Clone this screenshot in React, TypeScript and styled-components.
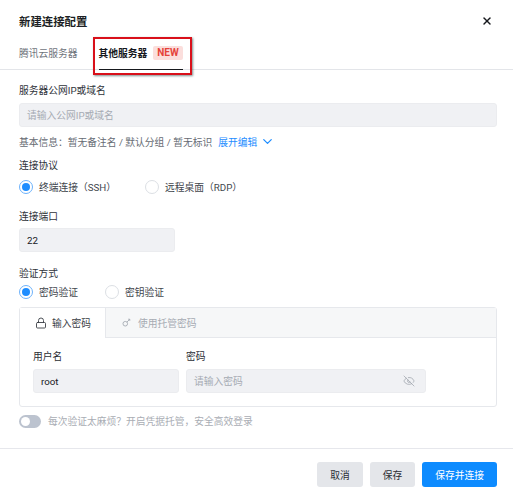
import React from 'react'
import styled, { createGlobalStyle } from 'styled-components'
import { X, ChevronDown, Lock, EyeOff } from 'lucide-react'

const GlobalStyle = createGlobalStyle`
  html, body {
    margin: 0;
    padding: 0;
    background: #fff;
  }
  * {
    box-sizing: border-box;
  }
`

const Dialog = styled.div`
  width: 513px;
  height: 500px;
  display: flex;
  flex-direction: column;
  background: #fff;
  color: #16181d;
  font-family: Roboto, "Noto Sans CJK SC", sans-serif;
  font-size: 9.75px;
  overflow: hidden;
`

const Header = styled.div`
  height: 37px;
  padding: 4px 20px 0 19px;
  display: flex;
  justify-content: space-between;
  align-items: center;
`

const Title = styled.div`
  font-size: 11.4px;
  font-weight: 700;
  color: #1c1f24;
`

const CloseIcon = styled(X)`
  color: #16181d;
`

const TabBar = styled.div`
  height: 33px;
  padding: 0 19px;
  display: flex;
  gap: 21px;
  border-bottom: 1px solid #e3e5e9;
`

const Tab = styled.div<{ $active?: boolean }>`
  position: relative;
  height: 33px;
  padding-top: 9px;
  display: flex;
  gap: 6px;
  align-items: flex-start;
  font-weight: ${(p) => (p.$active ? 700 : 400)};
  color: ${(p) => (p.$active ? '#16181d' : '#6f747c')};
  border-bottom: ${(p) => (p.$active ? '1px solid #16181d' : 'none')};
`

const Highlight = styled.div`
  position: absolute;
  left: -6px;
  right: -9px;
  top: 0;
  bottom: -6px;
  border: 2px solid #d9101a;
  box-shadow: 1px 1px 2px rgba(60, 80, 80, 0.65);
  pointer-events: none;
`

const NewBadge = styled.span`
  height: 14px;
  padding: 0 4px;
  background: #fbdedc;
  border-radius: 2px;
  color: #e5433a;
  font-size: 10px;
  font-weight: 700;
  line-height: 14px;
`

const Body = styled.div`
  flex: 1;
  padding: 12px 16px 0 19px;
  display: flex;
  flex-direction: column;
`

const Label = styled.div<{ $top?: number }>`
  height: 17px;
  line-height: 17px;
  margin-top: ${(p) => p.$top || 0}px;
  color: #2f333a;
`

const Input = styled.div<{ $width?: number; $muted?: boolean; $top?: number }>`
  width: ${(p) => (p.$width ? `${p.$width}px` : '100%')};
  height: 24px;
  margin-top: ${(p) => p.$top || 0}px;
  padding: 0 10px 0 7px;
  display: flex;
  align-items: center;
  justify-content: space-between;
  background: #f0f1f4;
  border: 1px solid #ebecef;
  border-radius: 3px;
  color: ${(p) => (p.$muted ? '#a6abb3' : '#16181d')};
`

const InfoRow = styled.div`
  height: 17px;
  margin-top: 6px;
  display: flex;
  align-items: center;
  color: #666b73;
`

const ExpandLink = styled.span`
  margin-left: 6px;
  display: flex;
  align-items: center;
  gap: 3px;
  color: #1e8dff;
`

const RadioRow = styled.div<{ $gap: number; $top: number }>`
  height: 16px;
  margin-top: ${(p) => p.$top}px;
  display: flex;
  gap: ${(p) => p.$gap}px;
`

const RadioItem = styled.div`
  display: flex;
  align-items: center;
  gap: 6px;
  color: #42464d;
`

const RadioDot = styled.span<{ $on?: boolean }>`
  position: relative;
  width: 14px;
  height: 14px;
  border-radius: 50%;
  background: #fff;
  border: 1px solid ${(p) => (p.$on ? '#6db2fb' : '#dcdfe4')};

  &::after {
    content: '';
    display: ${(p) => (p.$on ? 'block' : 'none')};
    position: absolute;
    inset: 2px;
    border-radius: 50%;
    background: #1e8dff;
  }
`

const Panel = styled.div`
  margin-top: 7px;
  width: 478px;
  height: 100px;
  border: 1px solid #e6e8ec;
  border-radius: 3px;
  display: flex;
  flex-direction: column;
`

const PanelTabs = styled.div`
  height: 30px;
  display: flex;
  background: #f6f7f8;
  border-bottom: 1px solid #e6e8ec;
`

const PanelTab = styled.div<{ $active?: boolean }>`
  width: ${(p) => (p.$active ? '86px' : 'auto')};
  margin-bottom: ${(p) => (p.$active ? '-1px' : '0')};
  padding-left: ${(p) => (p.$active ? '15px' : '16px')};
  display: flex;
  align-items: center;
  gap: ${(p) => (p.$active ? '5px' : '7px')};
  background: ${(p) => (p.$active ? '#fff' : 'transparent')};
  border-right: ${(p) => (p.$active ? '1px solid #e6e8ec' : 'none')};
  color: ${(p) => (p.$active ? '#3a3e45' : '#a6abb3')};
`

const PanelBody = styled.div`
  padding: 10px 0 0 13px;
  display: flex;
  gap: 7px;
`

const Field = styled.div`
  display: flex;
  flex-direction: column;
`

const FieldLabel = styled.div`
  height: 17px;
  line-height: 17px;
  color: #2b2e34;
`

const ToggleRow = styled.div`
  height: 16px;
  margin-top: 6px;
  display: flex;
  align-items: center;
  gap: 7px;
  color: #a9adb4;
`

const Toggle = styled.span`
  width: 22px;
  height: 13px;
  padding: 2px;
  border-radius: 7px;
  background: #bcc3cf;
  display: block;

  &::before {
    content: '';
    display: block;
    width: 9px;
    height: 9px;
    border-radius: 50%;
    background: #fff;
  }
`

const Footer = styled.div`
  height: 52px;
  padding: 13px 16px 0 0;
  border-top: 1px solid #e6e7ec;
  display: flex;
  justify-content: flex-end;
  gap: 7px;
`

const Button = styled.div<{ $primary?: boolean }>`
  height: 25px;
  padding: 0 13px;
  display: flex;
  align-items: center;
  border-radius: 3px;
  background: ${(p) => (p.$primary ? '#0d8bff' : '#e4e6ea')};
  color: ${(p) => (p.$primary ? '#fff' : '#2b2e34')};
`

const KeyIcon = () => (
  <svg width="9" height="9" viewBox="0 0 11 11" fill="none" stroke="#a6abb3" strokeWidth="1.1">
    <circle cx="4" cy="7" r="2.8" />
    <path d="M6 5 L9.5 1.5 M7.5 1.5 H9.5 V3.5" />
  </svg>
)

const App: React.FC = () => (
  <Dialog>
    <GlobalStyle />
    <Header>
      <Title>新建连接配置</Title>
      <CloseIcon size={12} strokeWidth={2.8} />
    </Header>
    <TabBar>
      <Tab>腾讯云服务器</Tab>
      <Tab $active>
        其他服务器
        <NewBadge>NEW</NewBadge>
        <Highlight />
      </Tab>
    </TabBar>
    <Body>
      <Label>服务器公网IP或域名</Label>
      <Input $muted $top={4}>请输入公网IP或域名</Input>
      <InfoRow>
        基本信息：暂无备注名 / 默认分组 / 暂无标识
        <ExpandLink>
          展开编辑
          <ChevronDown size={15} strokeWidth={2} />
        </ExpandLink>
      </InfoRow>
      <Label $top={7}>连接协议</Label>
      <RadioRow $gap={29} $top={5}>
        <RadioItem><RadioDot $on />终端连接（SSH）</RadioItem>
        <RadioItem><RadioDot />远程桌面（RDP）</RadioItem>
      </RadioRow>
      <Label $top={13}>连接端口</Label>
      <Input $width={156} $top={3}>22</Input>
      <Label $top={13}>验证方式</Label>
      <RadioRow $gap={27} $top={2}>
        <RadioItem><RadioDot $on />密码验证</RadioItem>
        <RadioItem><RadioDot />密钥验证</RadioItem>
      </RadioRow>
      <Panel>
        <PanelTabs>
          <PanelTab $active>
            <Lock size={12} strokeWidth={1.8} />
            输入密码
          </PanelTab>
          <PanelTab>
            <KeyIcon />
            使用托管密码
          </PanelTab>
        </PanelTabs>
        <PanelBody>
          <Field>
            <FieldLabel>用户名</FieldLabel>
            <Input $width={146} $top={4}>root</Input>
          </Field>
          <Field>
            <FieldLabel>密码</FieldLabel>
            <Input $width={240} $muted $top={4}>
              请输入密码
              <EyeOff size={12} strokeWidth={1.4} color="#9a9fa7" />
            </Input>
          </Field>
        </PanelBody>
      </Panel>
      <ToggleRow>
        <Toggle />
        每次验证太麻烦？开启凭据托管，安全高效登录
      </ToggleRow>
    </Body>
    <Footer>
      <Button>取消</Button>
      <Button>保存</Button>
      <Button $primary>保存并连接</Button>
    </Footer>
  </Dialog>
)

export default App
